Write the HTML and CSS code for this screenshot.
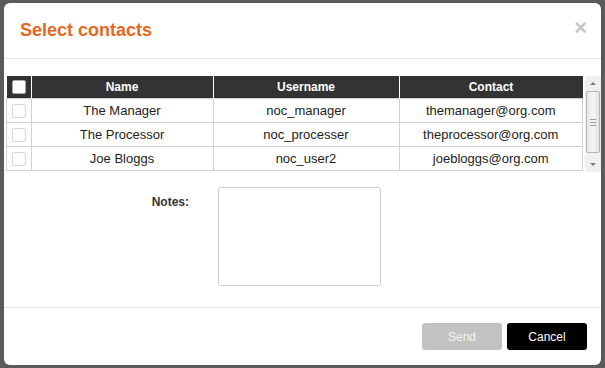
FILE: index.html
```html
<!DOCTYPE html>
<html lang="en">
<head>
  <meta charset="UTF-8" />
  <title>Select contacts</title>
  <link rel="stylesheet" href="styles.css">
</head>
<body>

<div class="modal">
  <div class="modal-header">
    <h3 class="title">Select contacts</h3>
    <span class="close">&times;</span>
  </div>

  <div class="modal-body">
    <div class="grid-wrap">
      <table class="contacts">
        <thead>
          <tr>
            <th class="check-col"><span class="box box-head"></span></th>
            <th class="name-col">Name</th>
            <th class="user-col">Username</th>
            <th>Contact</th>
          </tr>
        </thead>
        <tbody>
          <tr>
            <td class="check-col"><span class="box"></span></td>
            <td>The Manager</td>
            <td>noc_manager</td>
            <td>themanager@org.com</td>
          </tr>
          <tr>
            <td class="check-col"><span class="box"></span></td>
            <td>The Processor</td>
            <td>noc_processer</td>
            <td>theprocessor@org.com</td>
          </tr>
          <tr>
            <td class="check-col"><span class="box"></span></td>
            <td>Joe Bloggs</td>
            <td>noc_user2</td>
            <td>joebloggs@org.com</td>
          </tr>
        </tbody>
      </table>

      <div class="scrollbar">
        <div class="arrow arrow-up"></div>
        <div class="track">
          <div class="thumb"><span class="grip"></span></div>
        </div>
        <div class="arrow arrow-down"></div>
      </div>
    </div>

    <div class="form-row">
      <label class="label" for="notes">Notes:</label>
      <textarea id="notes" class="notes"></textarea>
    </div>
  </div>

  <div class="modal-footer">
    <button class="btn btn-send">Send</button>
    <button class="btn btn-cancel">Cancel</button>
  </div>
</div>

</body>
</html>
```

FILE: styles.css
```css
body {
  margin: 0;
  background: #5a5a5a;
  font-family: 'Liberation Sans', Arial, sans-serif;
  font-size: 12px;
  color: #222;
}
.modal {
  margin: 3px 0 0 4px;
  width: 597px;
  height: 362px;
  background: #fff;
  border-radius: 6px;
  display: flex;
  flex-direction: column;
}
.modal-header {
  height: 55px;
  border-bottom: 1px solid #e5e5e5;
  display: flex;
  align-items: center;
  justify-content: space-between;
  padding: 0 14px 0 16px;
}
.title {
  margin: 0;
  font-size: 18px;
  font-weight: bold;
  color: #e4691e;
}
.close {
  font-size: 22px;
  font-weight: bold;
  color: #c4c4c4;
  line-height: 1;
  margin-top: -6px;
}
.modal-body {
  flex: 1;
  padding: 17px 0 0 2px;
}
.grid-wrap {
  display: flex;
  align-items: flex-start;
}
.contacts {
  width: 577px;
  border-collapse: collapse;
  table-layout: fixed;
}
.contacts th {
  background: #333;
  color: #fff;
  font-weight: bold;
  height: 22px;
  padding: 0;
  border-left: 1px solid #fff;
  text-align: center;
}
.contacts th:first-child {
  border-left: none;
}
.contacts td {
  height: 23px;
  padding: 0;
  border: 1px solid #d0d0d0;
  text-align: center;
  font-size: 13px;
}
.check-col {
  width: 24px;
}
.name-col {
  width: 181px;
}
.user-col {
  width: 185px;
}
.box {
  display: inline-block;
  width: 12px;
  height: 12px;
  border: 1px solid #d6d6d6;
  border-radius: 2px;
  vertical-align: middle;
}
.box-head {
  background: #fff;
  border-color: #aaa;
}
.scrollbar {
  width: 16px;
  height: 96px;
  margin-left: 2px;
  background: #f0f0f0;
  display: flex;
  flex-direction: column;
}
.arrow {
  height: 15px;
  position: relative;
}
.arrow::after {
  content: "";
  position: absolute;
  left: 5px;
  border-left: 3px solid transparent;
  border-right: 3px solid transparent;
}
.arrow-up::after {
  top: 6px;
  border-bottom: 3px solid #777;
}
.arrow-down::after {
  top: 6px;
  border-top: 3px solid #777;
}
.track {
  flex: 1;
  padding: 0 1px;
}
.thumb {
  height: 60px;
  background: linear-gradient(to right, #e6e6e6, #f7f7f7 50%, #e2e2e2);
  border: 1px solid #b5b5b5;
  border-radius: 2px;
  display: flex;
  align-items: center;
  justify-content: center;
}
.grip {
  width: 6px;
  height: 5px;
  border-top: 1px solid #999;
  border-bottom: 1px solid #999;
  position: relative;
}
.grip::after {
  content: "";
  position: absolute;
  left: 0;
  right: 0;
  top: 2px;
  border-top: 1px solid #999;
}
.form-row {
  display: flex;
  margin-top: 15px;
}
.label {
  width: 183px;
  text-align: right;
  font-weight: bold;
  color: #333;
  padding-top: 8px;
}
.notes {
  margin-left: 29px;
  width: 163px;
  height: 99px;
  box-sizing: border-box;
  border: 1px solid #ccc;
  border-radius: 3px;
  resize: none;
  padding: 4px;
}
.modal-footer {
  border-top: 1px solid #e5e5e5;
  padding: 15px 14px 15px 0;
  display: flex;
  justify-content: flex-end;
  gap: 5px;
}
.btn {
  width: 80px;
  height: 27px;
  border: none;
  border-radius: 3px;
  font-family: 'Liberation Sans', Arial, sans-serif;
  font-size: 12px;
}
.btn-send {
  background: #c2c2c2;
  color: #f4f4f4;
}
.btn-cancel {
  background: #000;
  color: #fff;
}
```
